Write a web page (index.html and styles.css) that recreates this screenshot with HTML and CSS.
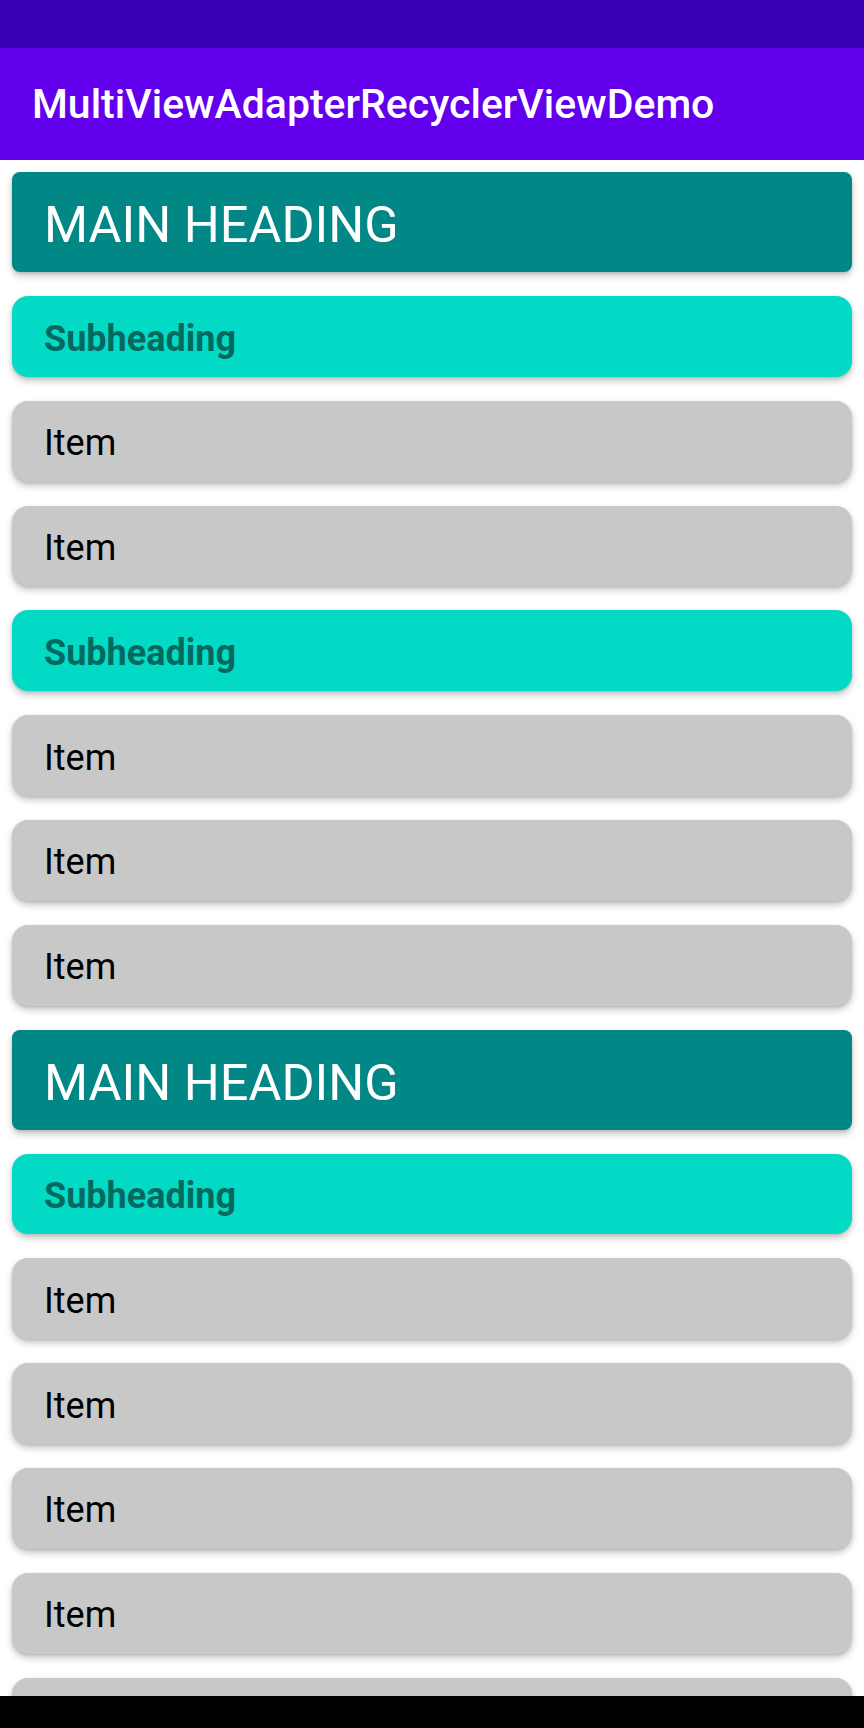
FILE: index.html
```html
<!DOCTYPE html>
<html>
<head>
<meta charset="utf-8">
<link rel="stylesheet" href="styles.css">
</head>
<body>
<div class="screen">
  <div class="status-bar"></div>
  <div class="app-bar"><span class="app-title">MultiViewAdapterRecyclerViewDemo</span></div>
  <div class="list">
    <div class="card main-heading">MAIN HEADING</div>
    <div class="card subheading">Subheading</div>
    <div class="card item">Item</div>
    <div class="card item">Item</div>
    <div class="card subheading">Subheading</div>
    <div class="card item">Item</div>
    <div class="card item">Item</div>
    <div class="card item">Item</div>
    <div class="card main-heading">MAIN HEADING</div>
    <div class="card subheading">Subheading</div>
    <div class="card item">Item</div>
    <div class="card item">Item</div>
    <div class="card item">Item</div>
    <div class="card item">Item</div>
    <div class="card item">Item</div>
  </div>
  <div class="nav-bar"></div>
</div>
</body>
</html>
```

FILE: styles.css
```css
html, body {
  margin: 0;
  padding: 0;
  background: #ffffff;
}

.screen {
  width: 864px;
  height: 1728px;
  display: flex;
  flex-direction: column;
  overflow: hidden;
  font-family: Roboto, "Noto Sans", sans-serif;
  background: #ffffff;
}

.status-bar {
  height: 48px;
  flex: 0 0 48px;
  background: #3700b3;
}

.app-bar {
  height: 112px;
  flex: 0 0 112px;
  background: #6200ee;
  display: flex;
  align-items: center;
  padding-left: 32px;
  box-sizing: border-box;
  position: relative;
  z-index: 2;
}

.app-title {
  color: #ffffff;
  font-weight: 500;
  font-size: 41px;
  line-height: 48px;
}

.list {
  flex: 1 1 auto;
  overflow: hidden;
  padding: 12px 12px 0 12px;
  display: flex;
  flex-direction: column;
  gap: 24px;
}

.card {
  flex: 0 0 auto;
  box-sizing: border-box;
  padding-left: 32px;
  box-shadow: 0 4px 7px rgba(0, 0, 0, 0.22), 0 1px 3px rgba(0, 0, 0, 0.12);
}

.main-heading {
  height: 100px;
  background: #018786;
  color: #ffffff;
  border-radius: 8px;
  font-size: 50.5px;
  font-weight: 400;
  line-height: 60px;
  padding-top: 23px;
}

.subheading {
  height: 80.8px;
  background: #03dac5;
  color: #03695f;
  border-radius: 16px;
  font-size: 36px;
  font-weight: 700;
  line-height: 42px;
  padding-top: 21.5px;
}

.item {
  height: 80.8px;
  background: #c8c8c8;
  color: #000000;
  border-radius: 16px;
  font-size: 36px;
  font-weight: 400;
  line-height: 42px;
  padding-top: 21.5px;
}

.nav-bar {
  height: 32px;
  flex: 0 0 32px;
  background: #000000;
  position: relative;
  z-index: 2;
}
```
